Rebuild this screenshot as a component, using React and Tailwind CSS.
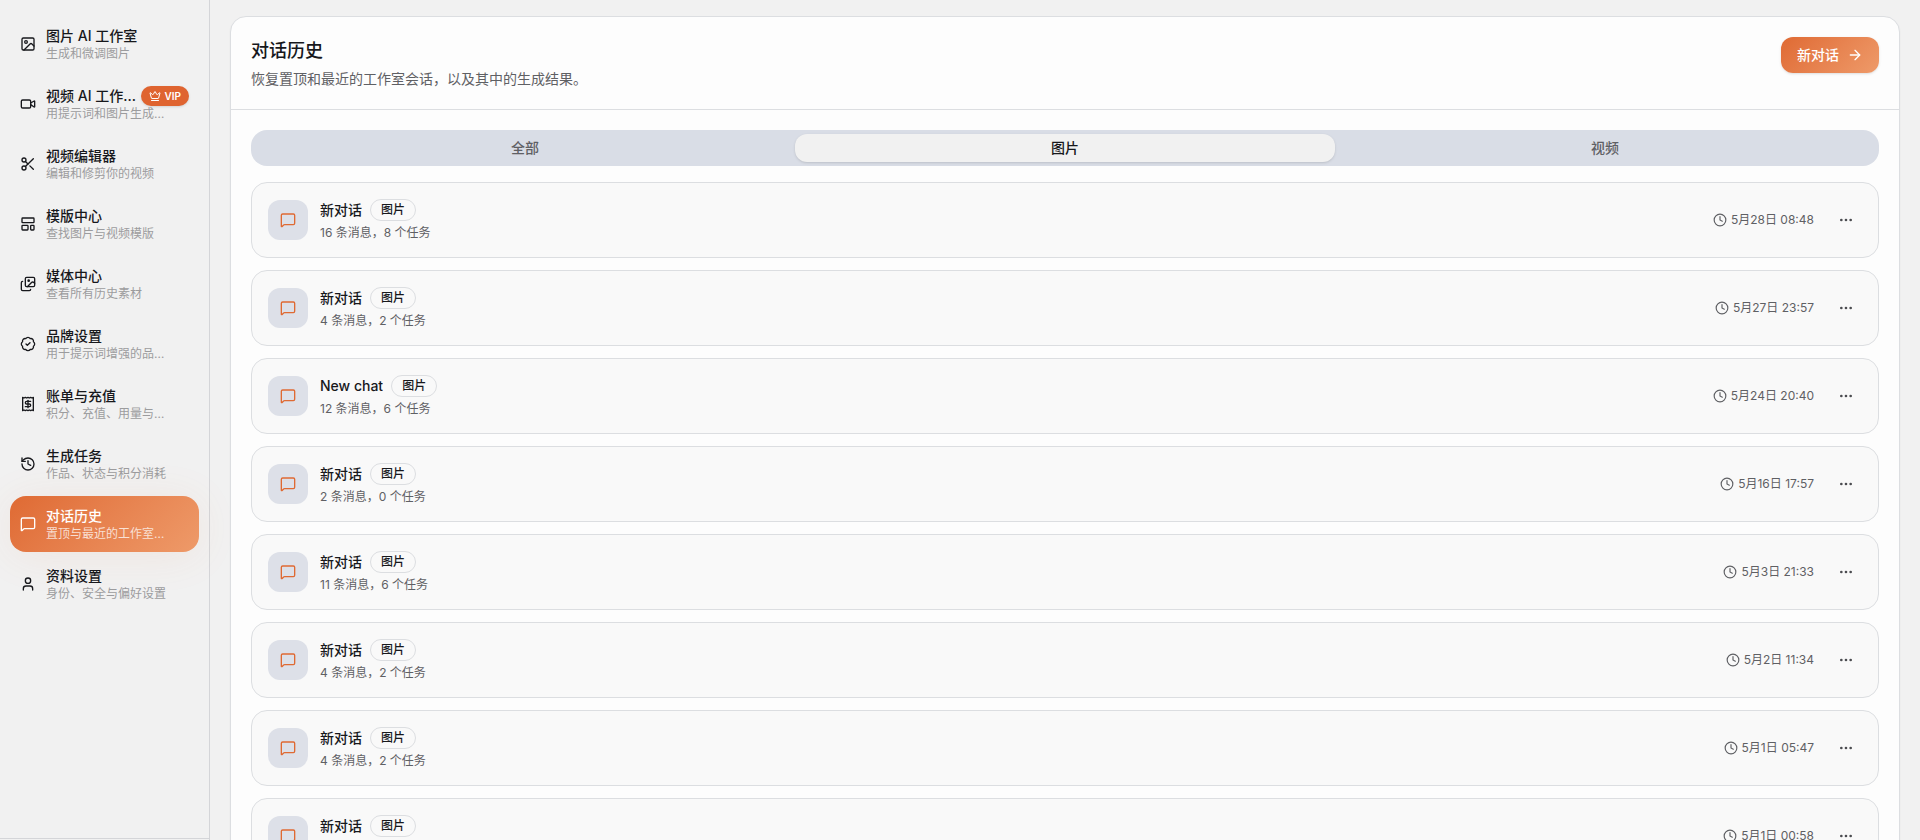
import React, { useState } from 'react';
import {
  ArrowRight,
  BadgeCheck,
  Clock,
  Crown,
  Ellipsis,
  History,
  Image,
  Images,
  LayoutTemplate,
  MessageSquare,
  Receipt,
  Scissors,
  User,
  Video,
} from 'lucide-react';

const navItems = [
  { id: 'image', icon: Image, title: '图片 AI 工作室', desc: '生成和微调图片' },
  { id: 'video', icon: Video, title: '视频 AI 工作室', desc: '用提示词和图片生成视频', vip: true },
  { id: 'editor', icon: Scissors, title: '视频编辑器', desc: '编辑和修剪你的视频' },
  { id: 'templates', icon: LayoutTemplate, title: '模版中心', desc: '查找图片与视频模版' },
  { id: 'media', icon: Images, title: '媒体中心', desc: '查看所有历史素材' },
  { id: 'brand', icon: BadgeCheck, title: '品牌设置', desc: '用于提示词增强的品牌资料' },
  { id: 'billing', icon: Receipt, title: '账单与充值', desc: '积分、充值、用量与账单' },
  { id: 'tasks', icon: History, title: '生成任务', desc: '作品、状态与积分消耗' },
  { id: 'history', icon: MessageSquare, title: '对话历史', desc: '置顶与最近的工作室会话' },
  { id: 'profile', icon: User, title: '资料设置', desc: '身份、安全与偏好设置' },
];

const tabs = ['全部', '图片', '视频'];

const conversations = [
  { id: 1, title: '新对话', messages: 16, tasks: 8, time: '5月28日 08:48' },
  { id: 2, title: '新对话', messages: 4, tasks: 2, time: '5月27日 23:57' },
  { id: 3, title: 'New chat', messages: 12, tasks: 6, time: '5月24日 20:40' },
  { id: 4, title: '新对话', messages: 2, tasks: 0, time: '5月16日 17:57' },
  { id: 5, title: '新对话', messages: 11, tasks: 6, time: '5月3日 21:33' },
  { id: 6, title: '新对话', messages: 4, tasks: 2, time: '5月2日 11:34' },
  { id: 7, title: '新对话', messages: 4, tasks: 2, time: '5月1日 05:47' },
  { id: 8, title: '新对话', messages: 4, tasks: 2, time: '5月1日 00:58' },
];

const NavItem = ({ item, active }) => {
  const Icon = item.icon;
  return (
    <a
      href={`#${item.id}`}
      aria-current={active ? 'page' : undefined}
      className={
        active
          ? 'flex items-center gap-2.5 rounded-2xl bg-linear-135 from-[#df6a33] to-[#ee9a69] p-2.5 text-white shadow-[0_4px_44px_rgba(223,106,51,0.09)]'
          : 'flex items-center gap-2.5 rounded-2xl p-2.5 text-[#17181c]'
      }
    >
      <Icon className="size-4 shrink-0" />
      <span className="min-w-0 flex-1">
        <span className="flex items-center justify-between gap-1">
          <span className="truncate text-sm leading-5 font-medium">{item.title}</span>
          {item.vip && (
            <span className="flex h-5 shrink-0 items-center gap-1 rounded-full bg-[#df6430] px-2 text-[10px] font-semibold text-white shadow-sm">
              <Crown className="size-3" />
              VIP
            </span>
          )}
        </span>
        <span
          className={
            active
              ? 'block truncate pr-5 text-xs leading-4 text-white/75'
              : 'block truncate pr-5 text-xs leading-4 text-[#9c9c9e]'
          }
        >
          {item.desc}
        </span>
      </span>
    </a>
  );
};

const ConversationRow = ({ conversation }) => (
  <li className="flex items-center gap-4 rounded-2xl border border-[#dcdee1] bg-[#f9f9f9] p-4">
    <div className="flex min-w-0 flex-1 items-center gap-3">
      <div className="flex size-10 shrink-0 items-center justify-center rounded-xl bg-[#dde0e8] text-[#df6a33]">
        <MessageSquare className="size-4" />
      </div>
      <div className="min-w-0">
        <div className="flex items-center gap-2">
          <h2 className="truncate text-sm leading-5 font-medium text-[#17181c]">{conversation.title}</h2>
          <span className="shrink-0 rounded-full border border-[#dcdee1] px-2.5 py-0.5 text-xs leading-4 font-medium text-[#17181c]">
            图片
          </span>
        </div>
        <p className="mt-1 text-xs leading-4 text-[#5f6064]">
          {conversation.messages} 条消息，{conversation.tasks} 个任务
        </p>
      </div>
    </div>
    <div className="flex items-center gap-1 text-xs leading-4 text-[#5f6064]">
      <Clock className="size-3.5" />
      <time>{conversation.time}</time>
    </div>
    <button
      type="button"
      aria-label="更多"
      className="flex size-8 items-center justify-center rounded-lg text-[#4b4c50]"
    >
      <Ellipsis className="size-4" />
    </button>
  </li>
);

const App = () => {
  const [activeTab, setActiveTab] = useState('图片');

  return (
    <div className="flex h-screen bg-[#f1f1f1] font-['Inter','Noto_Sans_CJK_SC',sans-serif]">
      <aside className="flex w-[210px] shrink-0 flex-col border-r border-[#d4d5d8]">
        <nav className="flex flex-1 flex-col gap-1 px-2.5 pt-4">
          {navItems.map((item) => (
            <NavItem key={item.id} item={item} active={item.id === 'history'} />
          ))}
        </nav>
        <div className="h-0.5 border-t border-[#d4d5d8]" />
      </aside>

      <main className="min-w-0 flex-1 overflow-y-auto px-5 pt-4 [scrollbar-width:none]">
        <section className="rounded-2xl border border-[#dcdee1] bg-[#fdfdfd] shadow-xs">
          <header className="flex items-start justify-between gap-4 border-b border-[#dcdee1] p-5">
            <div>
              <h1 className="text-lg leading-7 font-medium text-[#17181c]">对话历史</h1>
              <p className="mt-1 text-sm leading-5 text-[#5f6064]">恢复置顶和最近的工作室会话，以及其中的生成结果。</p>
            </div>
            <button
              type="button"
              className="flex h-9 items-center gap-2 rounded-xl bg-linear-135 from-[#df6a33] to-[#ee9a69] px-4 text-sm font-medium text-white shadow-sm"
            >
              新对话
              <ArrowRight className="size-4" />
            </button>
          </header>

          <div className="p-5">
            <div role="tablist" className="grid h-9 grid-cols-3 rounded-2xl bg-[#d9dde6] p-1">
              {tabs.map((tab) => (
                <button
                  key={tab}
                  type="button"
                  role="tab"
                  aria-selected={tab === activeTab}
                  onClick={() => setActiveTab(tab)}
                  className={
                    tab === activeTab
                      ? 'rounded-xl bg-[#f1f1f1] text-sm font-medium text-[#17181c] shadow-sm'
                      : 'rounded-xl text-sm font-medium text-[#5f6064]'
                  }
                >
                  {tab}
                </button>
              ))}
            </div>

            <ul className="mt-4 flex flex-col gap-3">
              {conversations.map((conversation) => (
                <ConversationRow key={conversation.id} conversation={conversation} />
              ))}
            </ul>
          </div>
        </section>
      </main>
    </div>
  );
};

export default App;
